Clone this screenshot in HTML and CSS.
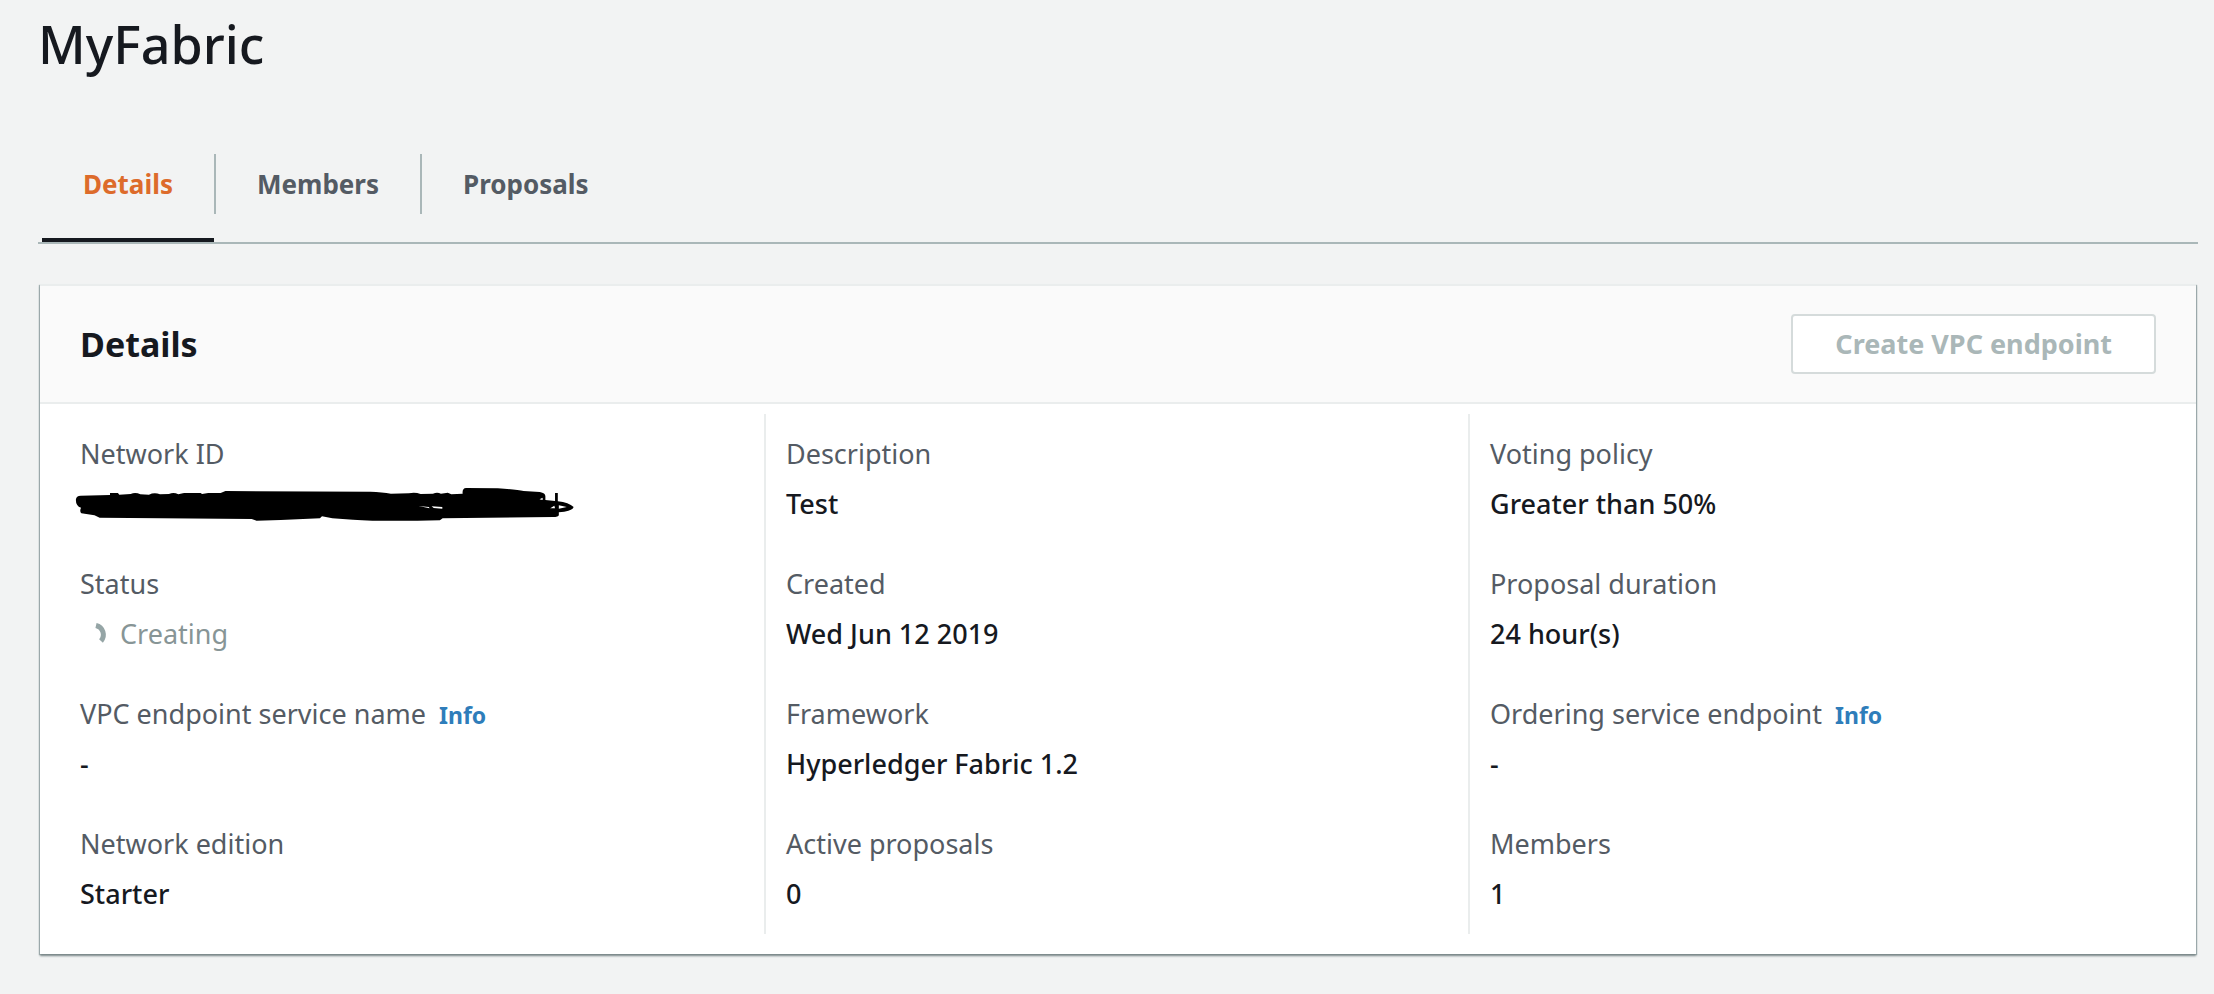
FILE: index.html
```html
<!DOCTYPE html>
<html lang="en">
<head>
<meta charset="utf-8">
<title>MyFabric</title>
<meta name="viewport" content="width=device-width, initial-scale=1">
<link rel="stylesheet" href="styles.css">
</head>
<body>
<main class="page">
  <h1 class="page-title">MyFabric</h1>
  <nav class="tabs" aria-label="Network sections">
    <a class="tab tab-active" href="#details" aria-current="page"><span class="tab-label">Details</span></a>
    <a class="tab" href="#members"><span class="tab-label">Members</span></a>
    <a class="tab" href="#proposals"><span class="tab-label">Proposals</span></a>
  </nav>
  <section class="card" id="details">
    <header class="card-header">
      <h2 class="card-title">Details</h2>
      <button class="button" type="button" disabled>Create VPC endpoint</button>
    </header>
    <div class="columns">
      <dl class="column">
        <div class="field">
          <dt class="label">Network ID</dt>
          <dd class="value">
            <svg class="redaction" viewBox="58 54 1433 102" preserveAspectRatio="none" role="img" aria-label="Redacted">
              <path d="M46 92Q47 80 60 80L145 78V72H168L172 77L205 75Q219 69 233 76L258 77Q274 69 290 76L316 75Q330 69 343 76L360 72H408L412 75L430 72H466L480 66L900 68Q935 69 960 74L1012 73Q1030 69 1046 75L1082 74Q1094 69 1105 74L1125 71L1135 76L1168 74Q1166 58 1178 57L1270 58Q1325 61 1345 66L1392 69Q1408 72 1408 82V93L1436 96V72H1444V97Q1476 101 1490 114Q1487 126 1447 130V138Q1446 144 1430 144L1110 148L1102 154Q930 158 850 152L790 148L760 142L754 148L640 153L570 155L556 150L115 146L100 139L62 133Q56 127 61 116Q46 111 46 92Z"/>
              <path class="redaction-gap" d="M1040 111L1070 114L1072 118L1058 115ZM1078 112L1109 114V119L1084 117ZM1391 91L1400 86V93ZM1422 118L1434 110L1436 118ZM1447 116L1447 109L1470 114L1447 119Z"/>
            </svg>
          </dd>
        </div>
        <div class="field">
          <dt class="label">Status</dt>
          <dd class="value value-pending">
            <svg class="spinner" viewBox="0 0 32 32" aria-hidden="true"><path d="M12 7.5A9.5 9.5 0 0 1 17 23" /></svg>
            <span>Creating</span>
          </dd>
        </div>
        <div class="field">
          <dt class="label">VPC endpoint service name <a class="info" href="#vpc-info">Info</a></dt>
          <dd class="value">-</dd>
        </div>
        <div class="field">
          <dt class="label">Network edition</dt>
          <dd class="value">Starter</dd>
        </div>
      </dl>
      <dl class="column">
        <div class="field"><dt class="label">Description</dt><dd class="value">Test</dd></div>
        <div class="field"><dt class="label">Created</dt><dd class="value">Wed Jun 12 2019</dd></div>
        <div class="field"><dt class="label">Framework</dt><dd class="value">Hyperledger Fabric 1.2</dd></div>
        <div class="field"><dt class="label">Active proposals</dt><dd class="value">0</dd></div>
      </dl>
      <dl class="column">
        <div class="field"><dt class="label">Voting policy</dt><dd class="value">Greater than 50%</dd></div>
        <div class="field"><dt class="label">Proposal duration</dt><dd class="value">24 hour(s)</dd></div>
        <div class="field"><dt class="label">Ordering service endpoint <a class="info" href="#ordering-info">Info</a></dt><dd class="value">-</dd></div>
        <div class="field"><dt class="label">Members</dt><dd class="value">1</dd></div>
      </dl>
    </div>
  </section>
</main>
</body>
</html>
```
FILE: styles.css
```css
* { box-sizing: border-box; }

body {
  margin: 0;
  background: #f2f3f3;
  color: #16191f;
  font-family: "Noto Sans", "Open Sans", sans-serif;
  font-size: 27px;
  line-height: 44px;
}

.page { padding: 8px 16px 40px 38px; }

.page-title {
  margin: 0;
  font-size: 52px;
  font-weight: 500;
  line-height: 72px;
}

.tabs {
  display: flex;
  margin-top: 74px;
  padding-left: 4px;
  border-bottom: 2px solid #aab7b8;
}

.tab {
  padding-bottom: 24px;
  border-bottom: 4px solid transparent;
  color: #545b64;
  font-size: 26px;
  font-weight: 700;
  text-decoration: none;
}

.tab-active {
  border-bottom-color: #16191f;
  color: #dd6b2b;
}

.tab-label {
  display: block;
  padding: 8px 41px;
}

.tab + .tab .tab-label { border-left: 2px solid #aab7b8; }

.card {
  margin: 40px 2px 0;
  border-top: 2px solid #eaeded;
  background: #fff;
  box-shadow: 0 2px 2px #7d8a8b, 1px 1px 1px #aab7b8, -1px 1px 1px #aab7b8;
}

.card-header {
  display: flex;
  align-items: center;
  justify-content: space-between;
  padding: 28px 40px;
  border-bottom: 2px solid #eaeded;
  background: #fafafa;
}

.card-title {
  margin: 0;
  font-size: 34px;
  font-weight: 700;
}

.button {
  padding: 6px 42px;
  border: 2px solid #d5dbdb;
  border-radius: 4px;
  background: #fff;
  color: #aab7b8;
  font: inherit;
  font-weight: 700;
}

.columns {
  display: grid;
  grid-template-columns: repeat(3, 1fr);
  padding: 10px 24px 20px 20px;
}

.column {
  display: grid;
  gap: 36px;
  margin: 0;
  padding: 18px 20px;
}

.column + .column { border-left: 2px solid #eaeded; }

.field { display: grid; gap: 6px; }

.label { color: #545b64; }

.value {
  display: flex;
  align-items: center;
  height: 44px;
  margin: 0;
  font-weight: 500;
}

.value-pending {
  color: #879596;
  font-weight: 400;
}

.info {
  margin-left: 6px;
  color: #2e7dba;
  font-size: 23px;
  font-weight: 700;
  line-height: 1;
  text-decoration: none;
}

.redaction {
  width: 494px;
  height: 34px;
  overflow: visible;
}

.redaction-gap { fill: #fff; }

.spinner {
  width: 32px;
  height: 32px;
  margin: 0 4px;
  fill: none;
  stroke: #95a5a6;
  stroke-width: 5;
}
```
